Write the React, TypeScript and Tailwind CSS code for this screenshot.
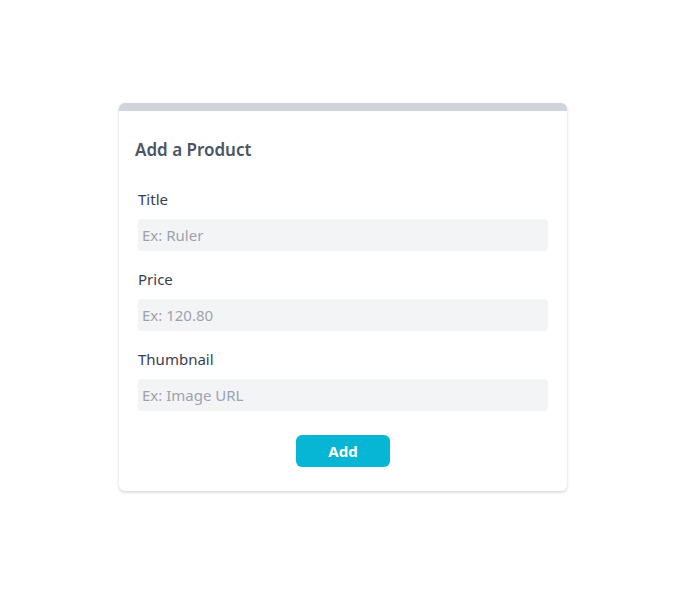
import React from "react";

export default function App() {
  return (
    <div className="min-h-[607px] w-full bg-white flex justify-center pr-[6px]" style={{ fontFamily: '"Noto Sans", "Open Sans", sans-serif' }}>
      <div className="mt-[103px] w-[448px] h-[388px] bg-white rounded-md border-t-8 border-[#d1d5db] shadow-[0_1px_3px_rgba(0,0,0,0.12),0_2px_4px_rgba(0,0,0,0.06)] flex flex-col">
        <h2 className="mt-[25px] px-4 text-[17px] leading-[28px] font-semibold text-[#4b5563]">Add a Product</h2>
        <div className="px-[19px] mt-[23px] flex flex-col gap-4">
          {[
            ["Title", "Ex: Ruler"],
            ["Price", "Ex: 120.80"],
            ["Thumbnail", "Ex: Image URL"],
          ].map(([label, ph]) => (
            <div key={label} className="flex flex-col gap-2">
              <label className="text-[15px] leading-6 text-[#374151]">{label}</label>
              <input
                placeholder={ph}
                className="h-8 w-full bg-[#f3f4f6] rounded-sm px-[4px] text-[15px] text-[#374151] placeholder:text-[#9ca3af] outline-none"
              />
            </div>
          ))}
        </div>
        <div className="flex justify-center mt-6">
          <button className="w-[94px] h-8 rounded-md bg-[#06b6d4] text-white font-bold text-[15px]">Add</button>
        </div>
      </div>
    </div>
  );
}
